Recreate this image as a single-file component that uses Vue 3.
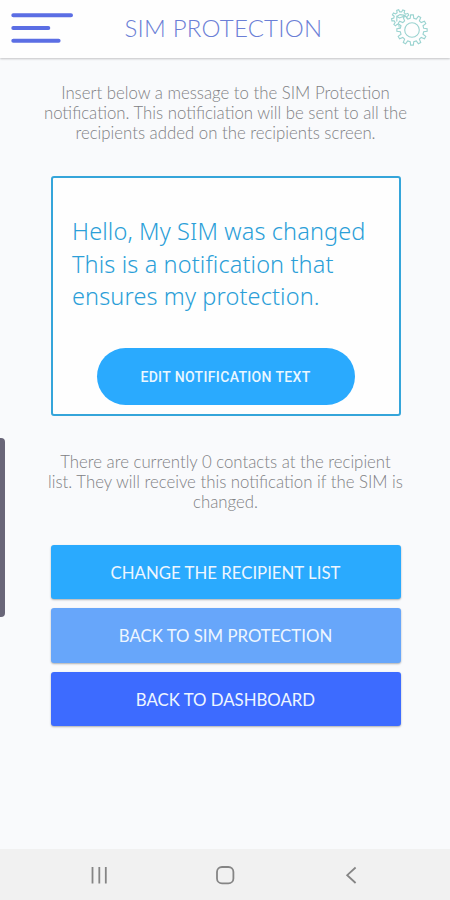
<script setup>
import { ref, computed } from 'vue';

const recipients = ref([]);

const introLines = [
  'Insert below a message to the SIM Protection',
  'notification. This notificiation will be sent to all the',
  'recipients added on the recipients screen.',
];

const messageLines = [
  'Hello, My SIM was changed',
  'This is a notification that',
  'ensures my protection.',
];

const statusLines = computed(() => [
  `There are currently ${recipients.value.length} contacts at the recipient`,
  'list. They will receive this notification if the SIM is',
  'changed.',
]);

const actions = [
  { key: 'recipients', label: 'CHANGE THE RECIPIENT LIST' },
  { key: 'protection', label: 'BACK TO SIM PROTECTION' },
  { key: 'dashboard', label: 'BACK TO DASHBOARD' },
];

// Closed outline of a cog: four points per tooth, root - tip - tip - root.
function gearPath(cx, cy, root, tip, teeth, turn = 0) {
  const step = (2 * Math.PI) / teeth;
  const points = [];
  for (let i = 0; i < teeth; i++) {
    const a = i * step + turn;
    [[-0.29, root], [-0.17, tip], [0.17, tip], [0.29, root]].forEach(([f, r]) => {
      const t = a + f * step;
      points.push(`${(cx + r * Math.cos(t)).toFixed(2)} ${(cy + r * Math.sin(t)).toFixed(2)}`);
    });
  }
  return `M${points.join('L')}Z`;
}

const bigGear = gearPath(22, 22, 11.8, 15.2, 12);
const smallGear = gearPath(10.5, 10.5, 6.7, 8.9, 9, 0.2);
</script>

<template>
  <div class="screen">
    <header class="topbar">
      <svg class="menu" width="62" height="32" viewBox="0 0 62 32">
        <path d="M2.3 3.3H60M2.3 16H37.3M2.3 28.8H47.6" />
      </svg>
      <h1 class="title">SIM PROTECTION</h1>
      <svg class="gears" width="40" height="40" viewBox="0 0 40 40">
        <defs>
          <mask id="behind">
            <rect width="40" height="40" fill="#fff" />
            <circle cx="22" cy="22" r="13" fill="#000" />
          </mask>
        </defs>
        <g mask="url(#behind)">
          <path :d="smallGear" />
          <path d="M6.8 13.5V8.4L9.6 10L15.5 7.4M6.8 8.4L10 6.6L15.5 7.4" />
        </g>
        <path :d="bigGear" />
        <circle cx="22" cy="22" r="7.3" />
      </svg>
    </header>

    <main class="content">
      <p class="note intro">
        <span v-for="line in introLines" :key="line">{{ line }}</span>
      </p>

      <section class="card">
        <p class="message">
          <span v-for="line in messageLines" :key="line">{{ line }}</span>
        </p>
        <button class="edit">EDIT NOTIFICATION TEXT</button>
      </section>

      <p class="note status">
        <span v-for="line in statusLines" :key="line">{{ line }}</span>
      </p>

      <div class="actions">
        <button v-for="a in actions" :key="a.key" class="action" :class="a.key">{{ a.label }}</button>
      </div>
    </main>

    <nav class="navbar">
      <svg width="24" height="24" viewBox="0 0 24 24"><path d="M5.5 4V20.5M12.3 4V20.5M18.8 4V20.5" /></svg>
      <svg width="24" height="24" viewBox="0 0 24 24"><rect x="4" y="4" width="16.4" height="16.4" rx="5" /></svg>
      <svg width="24" height="24" viewBox="0 0 24 24"><path d="M16.6 4.5L8.2 12.2L16.6 20" /></svg>
    </nav>

    <div class="edge-handle"></div>
  </div>
</template>

<style>
body { margin: 0; }
</style>

<style scoped>
.screen {
  position: relative;
  display: flex;
  flex-direction: column;
  width: 450px;
  height: 900px;
  overflow: hidden;
  background: #f9fafc;
  font-family: Lato, 'Liberation Sans', sans-serif;
}
.topbar {
  display: flex;
  align-items: flex-start;
  box-sizing: border-box;
  height: 58px;
  padding: 0 20px 0 11px;
  background: #fefefe;
  box-shadow: 0 1px 2px rgba(0, 0, 0, 0.22);
}
.menu {
  margin-top: 12px;
  fill: none;
  stroke: #5b6ee4;
  stroke-width: 4;
  stroke-linecap: round;
}
.title {
  margin: 13px 0 0 51.5px;
  font-size: 24px;
  font-weight: 300;
  line-height: 30px;
  letter-spacing: 0.22px;
  white-space: nowrap;
  color: #6b7fd6;
}
.gears {
  margin: 8px 0 0 auto;
  fill: none;
  stroke: #9ad3d0;
  stroke-width: 1.1;
}
.content {
  display: flex;
  flex: 1;
  flex-direction: column;
  align-items: center;
  padding-left: 1px;
}
.note {
  display: flex;
  flex-direction: column;
  align-items: center;
  margin: 0;
  font-size: 16.8px;
  font-weight: 300;
  line-height: 20px;
  white-space: nowrap;
  color: #808184;
}
.intro { margin-top: 25px; }
.card {
  display: flex;
  flex-direction: column;
  align-items: center;
  box-sizing: border-box;
  width: 350px;
  height: 240px;
  margin-top: 33px;
  padding-top: 37px;
  border: 2px solid #35a5da;
  border-radius: 3px;
  background: #fefefe;
}
.message {
  display: flex;
  flex-direction: column;
  align-self: stretch;
  margin: 0;
  padding-left: 19.5px;
  font-family: 'Noto Sans', sans-serif;
  font-size: 23.5px;
  font-weight: 350;
  line-height: 32.7px;
  letter-spacing: 0.12px;
  white-space: nowrap;
  color: #2b9fd8;
}
.edit {
  width: 258px;
  height: 57px;
  margin-top: 35px;
  padding: 0;
  border: 0;
  border-radius: 29px;
  background: #2aaafe;
  font-family: Roboto, sans-serif;
  font-size: 14px;
  font-weight: 500;
  letter-spacing: 0.35px;
  color: #eaf7ff;
}
.status { margin-top: 36px; }
.actions {
  display: flex;
  flex-direction: column;
  gap: 9px;
  margin-top: 33px;
}
.action {
  width: 350px;
  height: 54.3px;
  padding: 1px 0 0;
  border: 0;
  border-radius: 3px;
  font-family: inherit;
  font-size: 16.8px;
  color: #eef6ff;
  box-shadow: 0 1px 2px rgba(0, 0, 0, 0.3);
}
.recipients { background: #2aaafe; }
.protection { background: #67a6fa; }
.dashboard { background: #3d6bff; }
.navbar {
  display: flex;
  justify-content: space-between;
  box-sizing: border-box;
  height: 51px;
  padding: 14px 87px 0;
  background: #f1f1f1;
}
.navbar svg {
  fill: none;
  stroke: #858585;
  stroke-width: 1.8;
}
.edge-handle {
  position: absolute;
  top: 438px;
  left: 0;
  width: 5px;
  height: 179px;
  border-radius: 0 4px 4px 0;
  background: #696678;
}
</style>
